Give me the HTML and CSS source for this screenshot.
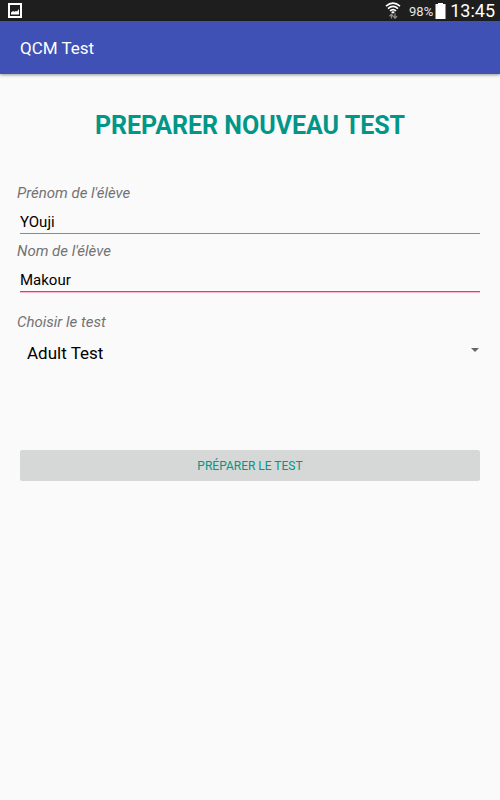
FILE: index.html
```html
<!DOCTYPE html>
<html lang="fr">
<head>
  <meta charset="UTF-8" />
  <title>QCM Test</title>
  <meta name="viewport" content="width=device-width,initial-scale=1"/>
  <link rel="stylesheet" href="styles.css">
</head>
<body>
  <div class="status-bar">
    <svg class="picture-icon" viewBox="0 0 14 15" width="14" height="15">
      <rect x="1" y="1" width="12" height="13" fill="none" stroke="#fff" stroke-width="2"/>
      <path d="M3 11.500V9.500L5 8l1.500.800L8 8l1 .500L11 6V11.500z" fill="#fff"/>
    </svg>
    <div class="status-right">
      <svg class="wifi-icon" viewBox="0 0 16 17" width="16" height="17">
        <g fill="none" stroke="#fff" stroke-width="1.600">
          <path d="M1 4.200Q8-1.800 15 4.200"/>
          <path d="M3 6.600Q8 2.200 13 6.600"/>
          <path d="M5 8.900Q8 6.200 11 8.900"/>
        </g>
        <path d="M6 9.900Q8 8.700 10 9.900L8 11.800z" fill="#fff"/>
        <path d="M6.500 16.500V12.500M4.500 14.200L6.500 12.200 8 14.200M10 11.500V16M8.300 14.300L10 16.200 12 14.300" fill="none" stroke="#8a8a8a" stroke-width="1.300"/>
      </svg>
      <span class="percent">98%</span>
      <svg class="battery-icon" viewBox="0 0 11 16" width="11" height="16">
        <path d="M3 0h5v1h2.500v15H.5V1H3z" fill="#fff"/>
      </svg>
      <span class="clock">13:45</span>
    </div>
  </div>
  <header class="app-bar">QCM Test</header>
  <main>
    <h1>PREPARER NOUVEAU TEST</h1>
    <form>
      <label for="prenom">Prénom de l'élève</label>
      <input class="field" id="prenom" type="text" value="YOuji">
      <label for="nom">Nom de l'élève</label>
      <input class="field active" id="nom" type="text" value="Makour">
      <label class="test-label" for="test">Choisir le test</label>
      <div class="spinner">
        <select id="test">
          <option>Adult Test</option>
        </select>
        <svg class="arrow" viewBox="0 0 8 4" width="8" height="4">
          <path d="M0 0h8L4 4z" fill="#666"/>
        </svg>
      </div>
      <button type="button">PRÉPARER LE TEST</button>
    </form>
  </main>
</body>
</html>
```
FILE: styles.css
```css
* {
  box-sizing: border-box;
}
body {
  margin: 0;
  background: #fafafa;
  color: #000;
  font-family: Roboto, sans-serif;
}
.status-bar {
  display: flex;
  align-items: center;
  justify-content: space-between;
  height: 21px;
  padding: 0 5px 0 8px;
  background: #1e1e1e;
  color: #fff;
}
.status-right {
  display: flex;
  align-items: center;
}
.wifi-icon {
  margin-right: 8px;
}
.percent {
  font-size: 13px;
  padding-top: 2px;
  margin-right: 2px;
  color: #e6e6e6;
}
.battery-icon {
  margin-right: 4px;
}
.clock {
  font-size: 18px;
  line-height: 20px;
}
.app-bar {
  height: 53px;
  padding: 0 20px;
  background: #3f51b5;
  color: #fff;
  font-size: 17px;
  line-height: 54px;
  box-shadow: 0 1px 3px rgba(0,0,0,0.4);
}
main {
  padding: 34px 20px 20px;
}
h1 {
  margin: 0 0 40px;
  font-size: 25px;
  font-weight: 700;
  line-height: 36px;
  text-align: center;
  color: #009688;
}
form {
  display: flex;
  flex-direction: column;
}
label {
  margin-left: -3px;
  font-size: 15px;
  font-style: italic;
  line-height: 18px;
  color: #737373;
}
.field {
  width: 100%;
  height: 32px;
  margin: 0 0 8px;
  padding: 9px 0 0;
  border: 0;
  border-bottom: 1px solid #8a8a8a;
  border-radius: 0;
  outline: none;
  background: transparent;
  font: 15px Roboto, sans-serif;
  color: #000;
}
.field.active {
  border-bottom-color: #ff2b78;
  box-shadow: 0 1px 0 #fbb4cc;
}
.test-label {
  margin-top: 13px;
}
.spinner {
  position: relative;
  margin-bottom: 79px;
}
.spinner select {
  width: 100%;
  height: 40px;
  padding: 4px 24px 0 7px;
  border: 0;
  outline: none;
  appearance: none;
  background: transparent;
  font: 17px Roboto, sans-serif;
  color: #000;
}
.arrow {
  position: absolute;
  right: 1px;
  top: 17px;
  pointer-events: none;
}
button {
  height: 31px;
  padding: 0;
  border: 0;
  border-radius: 2px;
  background: #d6d7d7;
  font: 12px Roboto, sans-serif;
  color: #009688;
}
```
